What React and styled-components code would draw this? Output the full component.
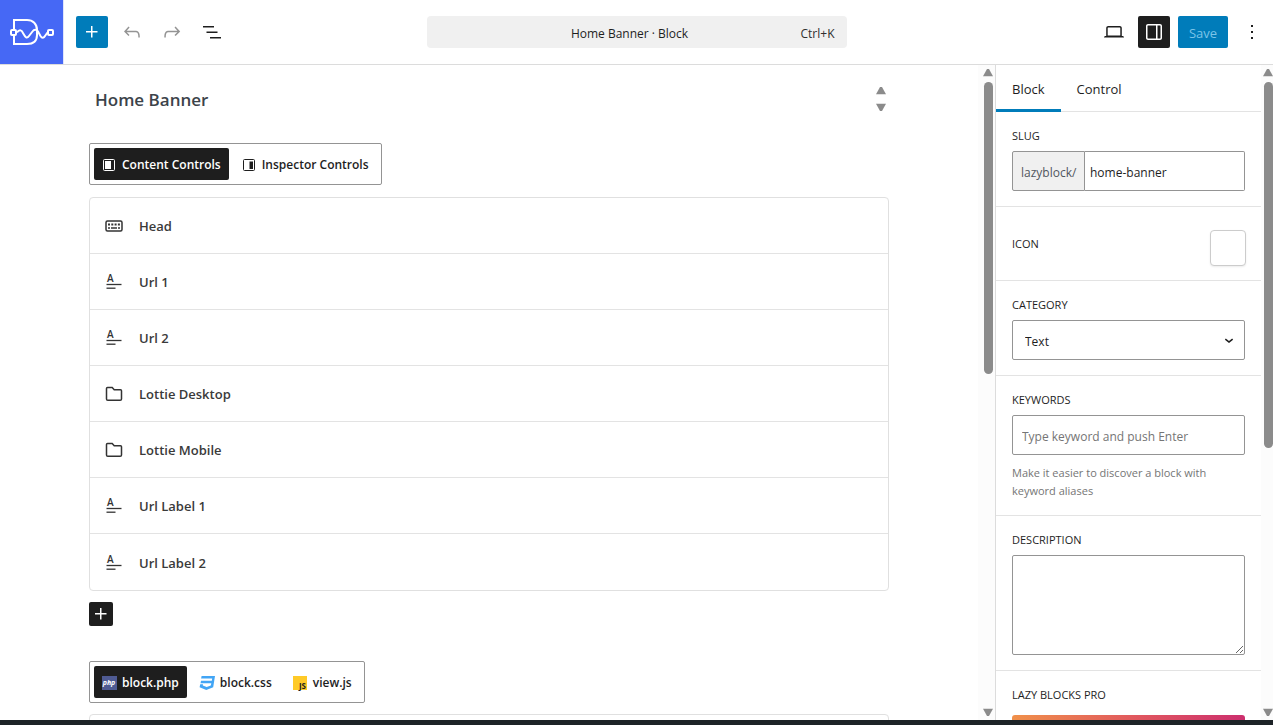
import React from "react";
import styled, { createGlobalStyle, css } from "styled-components";

const GlobalStyle = createGlobalStyle`
  *, *::before, *::after { box-sizing: border-box; }
  html, body { margin: 0; height: 100%; }
  body, button, input, select, textarea {
    font-family: "Open Sans", "Noto Sans", sans-serif;
    font-size: 12px;
    color: #1e1e1e;
  }
  button { margin: 0; cursor: pointer; }
`;

const Screen = styled.div`
  display: flex;
  flex-direction: column;
  height: 100vh;
  overflow: hidden;
  background: #fff;
  border-bottom: 5px solid #1d2327;
`;

const Header = styled.header`
  display: grid;
  grid-template-columns: 1fr minmax(0, 420px) 1fr;
  align-items: center;
  flex: none;
  height: 65px;
  border-bottom: 1px solid #dcdcdc;
`;

const HeaderStart = styled.div`
  display: flex;
  align-items: center;
  gap: 8px;
`;

const HeaderEnd = styled.div`
  display: flex;
  align-items: center;
  justify-content: flex-end;
  gap: 8px;
  padding-right: 5px;
`;

const Logo = styled.a`
  display: grid;
  place-items: center;
  width: 64px;
  height: 64px;
  margin-right: 4px;
  background: #4668f5;
  border-right: 1px solid #dfe4fb;
`;

const IconButton = styled.button`
  display: grid;
  place-items: center;
  flex: none;
  width: ${(p) => (p.$small ? 24 : 32)}px;
  height: ${(p) => (p.$small ? 24 : 32)}px;
  padding: 0;
  border: 0;
  border-radius: 2px;
  background: ${(p) => p.$bg || "transparent"};
  color: ${(p) => p.$color || "#1e1e1e"};
`;

const SaveButton = styled.button`
  width: 50px;
  height: 32px;
  padding: 2px 0 0;
  border: 0;
  border-radius: 2px;
  background: #007cba;
  font-size: 13px;
  color: #7cc4e8;
`;

const CommandBar = styled.button`
  display: flex;
  align-items: center;
  height: 32px;
  padding: 2px 12px 0 24px;
  border: 0;
  border-radius: 4px;
  background: #f0f0f0;
`;

const CommandTitle = styled.span`
  flex: 1;
  padding-left: 8px;
  text-align: center;
`;

const Shortcut = styled.span`
  color: #2f2f2f;
`;

const Body = styled.div`
  display: flex;
  flex: 1;
  min-height: 0;
`;

const Main = styled.main`
  flex: 1;
  min-width: 0;
  overflow: hidden;
`;

const Content = styled.div`
  max-width: 800px;
  margin: 0 auto;
  padding-top: 16px;
`;

const TitleRow = styled.div`
  display: flex;
  align-items: center;
  height: 36px;
  padding: 0 3px 0 6px;
  margin-bottom: 26px;
`;

const TitleInput = styled.input`
  flex: 1;
  min-width: 0;
  padding: 0;
  border: 0;
  outline: 0;
  background: transparent;
  font-size: 17px;
  font-weight: 600;
  color: #3c434a;
`;

const Spinner = styled.div`
  display: flex;
  flex-direction: column;
  gap: 8px;
`;

const Arrow = styled.button`
  width: 10px;
  height: 8px;
  padding: 0;
  border: 0;
  background: #8b8b8b;
  clip-path: ${(p) =>
    p.$down
      ? "polygon(0 10%, 100% 10%, 60% 100%, 40% 100%)"
      : "polygon(40% 0, 60% 0, 100% 90%, 0 90%)"};
`;

const ToggleGroup = styled.div`
  display: flex;
  gap: 5px;
  width: fit-content;
  height: 42px;
  padding: 4px;
  border: 1px solid #949494;
  border-radius: 2px;
`;

const Toggle = styled.button`
  display: flex;
  align-items: center;
  gap: 5px;
  height: 32px;
  padding: 1px 8px 0 7px;
  border: 0;
  border-radius: 2px;
  background: transparent;
  font-weight: 600;
  white-space: nowrap;
  ${(p) =>
    p.$active &&
    css`
      background: #1e1e1e;
      color: #fff;
    `}
`;

const ControlList = styled.ul`
  margin: 12px 0 11px;
  padding: 0;
  list-style: none;
  border: 1px solid #e0e0e0;
  border-radius: 4px;
`;

const ControlRow = styled.li`
  display: flex;
  align-items: center;
  gap: 13px;
  height: 56px;
  padding: 1px 12px 0;
  border-bottom: 1px solid #e3e3e3;
  font-size: 13px;
  font-weight: 600;
  color: #3a3a3a;
  &:last-child { border-bottom: 0; }
`;

const FileTabs = styled.div`
  margin: 35px 0 11px;
`;

const Editor = styled.div`
  height: 300px;
  border: 1px solid #e0e0e0;
  border-radius: 4px;
`;

const ScrollTrack = styled.div`
  display: flex;
  flex-direction: column;
  align-items: flex-end;
  flex: none;
  width: ${(p) => p.$width}px;
  padding: 4px ${(p) => p.$end}px 4px 0;
  background: #fcfcfc;
  overflow: hidden;
`;

const ScrollRun = styled.div`
  flex: 1;
  width: 9px;
  margin: 5px 0;
`;

const ScrollThumb = styled.div`
  width: 9px;
  height: ${(p) => p.$share}%;
  border-radius: 5px;
  background: #8b8b8b;
`;

const Sidebar = styled.aside`
  display: flex;
  flex: none;
  width: 278px;
  border-left: 1px solid #dcdcdc;
`;

const Panels = styled.div`
  flex: 1;
  min-width: 0;
  overflow: hidden;
`;

const Tabs = styled.div`
  display: flex;
  height: 47px;
  border-bottom: 1px solid #e3e3e3;
`;

const Tab = styled.button`
  height: 47px;
  padding: 3px 16px 0;
  border: 0;
  border-bottom: 3px solid ${(p) => (p.$active ? "#007cba" : "transparent")};
  background: transparent;
  font-size: 13px;
  font-weight: 500;
`;

const Panel = styled.section`
  padding: 16px 16px 15px;
  border-bottom: 1px solid #e3e3e3;
`;

const InlinePanel = styled(Panel)`
  display: flex;
  justify-content: space-between;
  align-items: flex-start;
  padding: 23px 15px 14px 16px;
`;

const FieldLabel = styled.label`
  display: block;
  margin: ${(p) => (p.$inline ? "6px 0 0" : "0 0 7px")};
  font-size: 11px;
  line-height: 16px;
  font-weight: 500;
  text-transform: uppercase;
`;

const box = css`
  display: block;
  width: 100%;
  height: 40px;
  border: 1px solid #949494;
  border-radius: 2px;
  background: #fff;
  outline: 0;
`;

const TextInput = styled.input`
  ${box}
  padding: 2px 9px 0;
  &::placeholder { color: #757575; opacity: 1; }
`;

const SlugField = styled.div`
  display: flex;
`;

const SlugPrefix = styled.span`
  flex: none;
  width: 73px;
  height: 40px;
  padding: 2px 0 0 8px;
  border: 1px solid #949494;
  border-radius: 2px 0 0 2px;
  background: #f0f0f0;
  color: #50575e;
  line-height: 38px;
`;

const SlugInput = styled(TextInput)`
  min-width: 0;
  padding-left: 5px;
  border-left: 0;
  border-radius: 0 2px 2px 0;
`;

const SelectWrap = styled.div`
  position: relative;
  svg { position: absolute; right: 7px; top: 11px; pointer-events: none; }
`;

const Select = styled.select`
  ${box}
  appearance: none;
  padding: 2px 28px 0 12px;
`;

const IconPicker = styled.button`
  width: 36px;
  height: 36px;
  border: 1px solid #ccc;
  border-radius: 4px;
  background: #fff;
  box-shadow: 0 1px 2px rgba(0, 0, 0, 0.08);
`;

const Help = styled.p`
  margin: 9px 0 0;
  font-size: 11px;
  line-height: 18px;
  color: #757575;
`;

const TextArea = styled.textarea`
  ${box}
  height: 100px;
  resize: vertical;
`;

const ProButton = styled.a`
  display: block;
  height: 40px;
  margin-top: 12px;
  border-radius: 3px;
  background: linear-gradient(90deg, #f0904a, #e0565f 55%, #cc2f6e);
`;

const Glyph = ({ d, size = 24 }) => (
  <svg width={size} height={size} viewBox="0 0 24 24" fill="currentColor" aria-hidden="true">
    <path d={d} />
  </svg>
);

const paths = {
  plus: "M11 12.5V17.5H12.5V12.5H17.5V11H12.5V6H11V11H6V12.5H11Z",
  undo: "M18.3 11.7c-.6-.6-1.4-.9-2.3-.9H6.7l2.9-3.3-1.1-1-4.5 5L8.5 16l1-1-2.7-2.7H16c.5 0 .9.2 1.3.5 1 1 1 3.4 1 4.5v.3h1.5v-.2c0-1.5 0-4.3-1.5-5.7z",
  redo: "M15.6 6.5l-1.1 1 2.9 3.3H8c-.9 0-1.7.3-2.3.9-1.4 1.5-1.4 4.2-1.4 5.6v.2h1.5v-.3c0-1.1 0-3.5 1-4.5.3-.3.7-.5 1.3-.5h9.2L14.5 15l1.1 1.1 4.6-4.6-4.6-5z",
  list: "M3 6h11v1.5H3V6Zm3.5 5.5h11V13h-11v-1.5ZM21 17H10v1.5h11V17Z",
  laptop: "M20.5 16h-.7V8c0-1.1-.9-2-2-2H6.2c-1.1 0-2 .9-2 2v8h-.7c-.8 0-1.5.7-1.5 1.5h20c0-.8-.7-1.5-1.5-1.5zM5.7 8c0-.3.2-.5.5-.5h11.6c.3 0 .5.2.5.5v7.6H5.7V8z",
  drawer: "M18 4H6c-1.1 0-2 .9-2 2v12c0 1.1.9 2 2 2h12c1.1 0 2-.9 2-2V6c0-1.1-.9-2-2-2zm-4 14.5H6c-.3 0-.5-.2-.5-.5V6c0-.3.2-.5.5-.5h8v13zm4.5-.5c0 .3-.2.5-.5.5h-2.5v-13H18c.3 0 .5.2.5.5v12z",
  more: "M13 19h-2v-2h2v2zm0-6h-2v-2h2v2zm0-6h-2V5h2v2z",
  chevron: "M17.500 11.600L12 16l-5.500-4.400 1.200-1.600L12 13.400l4.200-3.400z",
};

const LogoMark = () => (
  <svg width="46" height="32" viewBox="0 0 46 32" fill="none" stroke="#fff" strokeWidth="2" aria-hidden="true">
    <path d="M5 14V4H18C24 4 28 8 28 14V19C28 25 24 28 18 28H5V20" />
    <path d="M8 16.500C10 13.500 12.500 13.500 14 17C16 20.500 17.500 23.500 20 20L23.500 15.500C25 13.500 27.500 13 29 15.500L31.500 20C33 22.500 35 22 36 20L38.500 16.500" />
    <rect x="2" y="14" width="5" height="5" rx="1" />
    <rect x="39" y="14" width="5" height="5" rx="1" />
  </svg>
);

const PaneIcon = ({ side }) => (
  <svg width="16" height="16" viewBox="0 0 16 16" fill="none" aria-hidden="true">
    <rect x="2.500" y="2.500" width="11" height="11" rx="1" stroke="currentColor" />
    {side ? (
      <path d="M8.500 4.500h3.500v7.500H8.500z" fill="currentColor" />
    ) : (
      <path d="M4 4h6v8H4z" fill="currentColor" />
    )}
  </svg>
);

const KeyboardIcon = () => (
  <svg width="24" height="24" viewBox="0 0 24 24" fill="none" stroke="#333" aria-hidden="true">
    <rect x="4" y="7" width="16" height="10" rx="1.500" strokeWidth="1.500" />
    <path d="M6 10.500h12" strokeWidth="2" strokeDasharray="2 1.300" />
    <path d="M6 14h2M9 14h6M16 14h2" strokeWidth="1.500" />
  </svg>
);

const TextIcon = () => (
  <svg width="24" height="24" viewBox="0 0 24 24" fill="none" stroke="#333" aria-hidden="true">
    <text x="5" y="12" fontSize="10" fontWeight="600" fill="#333" stroke="none">A</text>
    <path d="M4.500 14.500h15" strokeWidth="1.300" />
    <path d="M4.500 18.200h9" strokeWidth="1.300" />
  </svg>
);

const FolderIcon = () => (
  <svg width="24" height="24" viewBox="0 0 24 24" fill="none" stroke="#333" strokeWidth="1.500" aria-hidden="true">
    <path d="M4.500 6.500a1 1 0 0 1 1-1h4.700l2 2.200H18.500a1 1 0 0 1 1 1V17a1.300 1.300 0 0 1-1.300 1.300H5.800A1.300 1.300 0 0 1 4.500 17Z" />
  </svg>
);

const PhpIcon = () => (
  <svg width="16" height="16" viewBox="0 0 16 16" aria-hidden="true">
    <rect x="1" y="1" width="15" height="14" fill="#4f5b93" />
    <text x="8" y="10" textAnchor="middle" fontSize="7" fontStyle="italic" fontWeight="700" fill="#fff">php</text>
  </svg>
);

const CssIcon = () => (
  <svg width="16" height="16" viewBox="0 0 16 16" aria-hidden="true">
    <path d="M2.600 1H16L14.200 12.300L7.300 15L.6 12.300L1.200 9.300H4L3.800 10.600L7.700 12L11.800 10.600L12.300 8.300H1.500L2 5.700H12.800L13.200 3.600H2.100Z" fill="#42a5f5" />
  </svg>
);

const JsIcon = () => (
  <svg width="16" height="16" viewBox="0 0 16 16" aria-hidden="true">
    <rect x="1" y="1" width="14" height="14" fill="#ffca28" />
    <text x="14" y="14" textAnchor="end" fontSize="8" fontWeight="700" fill="#1e1e1e">JS</text>
  </svg>
);

const Scrollbar = ({ width, end, share }) => (
  <ScrollTrack $width={width} $end={end} aria-hidden="true">
    <Arrow as="span" />
    <ScrollRun>
      <ScrollThumb $share={share} />
    </ScrollRun>
    <Arrow as="span" $down />
  </ScrollTrack>
);

const controls = [
  ["Head", KeyboardIcon],
  ["Url 1", TextIcon],
  ["Url 2", TextIcon],
  ["Lottie Desktop", FolderIcon],
  ["Lottie Mobile", FolderIcon],
  ["Url Label 1", TextIcon],
  ["Url Label 2", TextIcon],
];

export default function App() {
  return (
    <Screen>
      <GlobalStyle />
      <Header>
        <HeaderStart>
          <Logo href="#" aria-label="Lazy Blocks"><LogoMark /></Logo>
          <IconButton $bg="#007cba" $color="#fff" aria-label="Add block"><Glyph d={paths.plus} /></IconButton>
          <IconButton $color="#949494" aria-label="Undo"><Glyph d={paths.undo} /></IconButton>
          <IconButton $color="#949494" aria-label="Redo"><Glyph d={paths.redo} /></IconButton>
          <IconButton aria-label="Document overview"><Glyph d={paths.list} /></IconButton>
        </HeaderStart>
        <CommandBar>
          <CommandTitle>Home Banner · Block</CommandTitle>
          <Shortcut>Ctrl+K</Shortcut>
        </CommandBar>
        <HeaderEnd>
          <IconButton aria-label="View"><Glyph d={paths.laptop} /></IconButton>
          <IconButton $bg="#1e1e1e" $color="#fff" aria-label="Settings"><Glyph d={paths.drawer} /></IconButton>
          <SaveButton>Save</SaveButton>
          <IconButton aria-label="Options"><Glyph d={paths.more} /></IconButton>
        </HeaderEnd>
      </Header>
      <Body>
        <Main>
          <Content>
            <TitleRow>
              <TitleInput aria-label="Title" defaultValue="Home Banner" />
              <Spinner>
                <Arrow aria-label="Scroll up" />
                <Arrow $down aria-label="Scroll down" />
              </Spinner>
            </TitleRow>
            <ToggleGroup>
              <Toggle $active><PaneIcon />Content Controls</Toggle>
              <Toggle><PaneIcon side />Inspector Controls</Toggle>
            </ToggleGroup>
            <ControlList>
              {controls.map(([name, Icon]) => (
                <ControlRow key={name}><Icon />{name}</ControlRow>
              ))}
            </ControlList>
            <IconButton $small $bg="#1e1e1e" $color="#fff" aria-label="Add control"><Glyph d={paths.plus} /></IconButton>
            <FileTabs>
              <ToggleGroup>
                <Toggle $active><PhpIcon />block.php</Toggle>
                <Toggle><CssIcon />block.css</Toggle>
                <Toggle><JsIcon />view.js</Toggle>
              </ToggleGroup>
            </FileTabs>
            <Editor />
          </Content>
        </Main>
        <Scrollbar width={17} end={2} share={47} />
        <Sidebar>
          <Panels>
            <Tabs>
              <Tab $active>Block</Tab>
              <Tab>Control</Tab>
            </Tabs>
            <Panel>
              <FieldLabel htmlFor="slug">Slug</FieldLabel>
              <SlugField>
                <SlugPrefix>lazyblock/</SlugPrefix>
                <SlugInput id="slug" defaultValue="home-banner" />
              </SlugField>
            </Panel>
            <InlinePanel>
              <FieldLabel $inline htmlFor="icon">Icon</FieldLabel>
              <IconPicker id="icon" />
            </InlinePanel>
            <Panel>
              <FieldLabel htmlFor="category">Category</FieldLabel>
              <SelectWrap>
                <Select id="category"><option>Text</option></Select>
                <Glyph d={paths.chevron} size={18} />
              </SelectWrap>
            </Panel>
            <Panel>
              <FieldLabel htmlFor="keywords">Keywords</FieldLabel>
              <TextInput id="keywords" placeholder="Type keyword and push Enter" />
              <Help>Make it easier to discover a block with keyword aliases</Help>
            </Panel>
            <Panel>
              <FieldLabel htmlFor="description">Description</FieldLabel>
              <TextArea id="description" />
            </Panel>
            <Panel>
              <FieldLabel as="h2">Lazy Blocks Pro</FieldLabel>
              <ProButton href="#" aria-label="Lazy Blocks Pro" />
            </Panel>
          </Panels>
          <Scrollbar width={12} end={0} share={59} />
        </Sidebar>
      </Body>
    </Screen>
  );
}
